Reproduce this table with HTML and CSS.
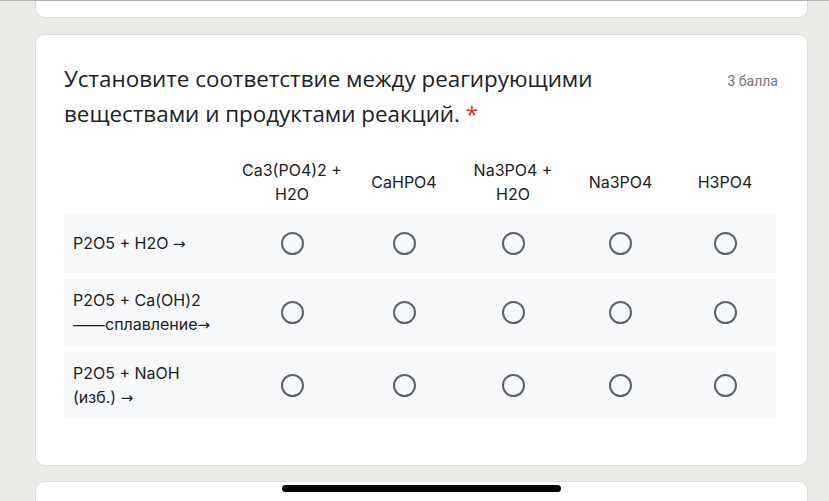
FILE: index.html
```html
<!DOCTYPE html>
<html lang="ru">
<head>
<meta charset="utf-8">
<title>Форма</title>
<link rel="stylesheet" href="styles.css">
</head>
<body>
<div class="topline"></div>
<div class="page">
  <div class="card card-prev"></div>
  <div class="card card-main">
    <div class="q-head">
      <div class="q-title">Установите соответствие между реагирующими веществами и продуктами реакций. <span class="req">*</span></div>
      <div class="points">3 балла</div>
    </div>
    <div class="grid">
      <div class="ghead">
        <div></div>
        <div class="col">Ca3(PO4)2 +<br>H2O</div>
        <div class="col">CaHPO4</div>
        <div class="col">Na3PO4 +<br>H2O</div>
        <div class="col">Na3PO4</div>
        <div class="col">H3PO4</div>
      </div>
      <div class="grow">
        <div class="label">P2O5 + H2O <span class="arrow">→</span></div>
        <div class="cell"><span class="radio"></span></div>
        <div class="cell"><span class="radio"></span></div>
        <div class="cell"><span class="radio"></span></div>
        <div class="cell"><span class="radio"></span></div>
        <div class="cell"><span class="radio"></span></div>
      </div>
      <div class="grow">
        <div class="label">P2O5 + Ca(OH)2<br><span class="dash">——</span>сплавление<span class="arrow">→</span></div>
        <div class="cell"><span class="radio"></span></div>
        <div class="cell"><span class="radio"></span></div>
        <div class="cell"><span class="radio"></span></div>
        <div class="cell"><span class="radio"></span></div>
        <div class="cell"><span class="radio"></span></div>
      </div>
      <div class="grow">
        <div class="label">P2O5 + NaOH<br>(изб.) <span class="arrow">→</span></div>
        <div class="cell"><span class="radio"></span></div>
        <div class="cell"><span class="radio"></span></div>
        <div class="cell"><span class="radio"></span></div>
        <div class="cell"><span class="radio"></span></div>
        <div class="cell"><span class="radio"></span></div>
      </div>
    </div>
  </div>
  <div class="card card-next"></div>
</div>
<div class="home-bar"></div>
</body>
</html>
```

FILE: styles.css
```css
* { box-sizing: border-box; }
html, body { margin: 0; padding: 0; }
body {
  background: #ecebe8;
  font-family: "Inter", "Roboto", sans-serif;
  color: #202124;
  height: 501px;
  overflow: hidden;
}
.topline {
  height: 1px;
  background: #b4b4b2;
}
.page {
  padding: 0 21px 0 35px;
}
.card {
  background: #fff;
  border: 1px solid #dcdcdc;
  border-radius: 9px;
}
.card-prev {
  height: 17px;
  border-top: none;
  border-radius: 0 0 9px 9px;
  margin-bottom: 16px;
}
.card-main {
  height: 432px;
  padding: 26px 29px 0 28px;
  margin-bottom: 15px;
}
.card-next {
  height: 40px;
}
.q-head {
  display: flex;
  justify-content: space-between;
  align-items: flex-start;
}
.q-title {
  font-family: "Open Sans", "Noto Sans", sans-serif;
  font-size: 22.4px;
  line-height: 35px;
  width: 620px;
  color: #202124;
}
.req { color: #d93025; }
.points {
  font-family: "Roboto", sans-serif;
  font-size: 14px;
  color: #70757a;
  padding-top: 12px;
}
.grid {
  margin-top: 27px;
  width: 712px;
}
.ghead, .grow {
  display: grid;
  grid-template-columns: 171px 114px 110px 108px 107px 1fr;
  align-items: center;
}
.ghead {
  margin-bottom: 7px;
}
.col {
  text-align: center;
  font-size: 16px;
  line-height: 24px;
}
.grow {
  background: #f8f9fa;
  min-height: 60px;
  margin-bottom: 6px;
}
.label {
  padding: 9px 0 9px 9px;
  font-size: 16px;
  line-height: 24px;
}
.arrow {
  font-family: "DejaVu Sans", sans-serif;
  font-size: 15px;
}
.dash {
  font-family: "Liberation Sans", sans-serif;
}
.cell {
  display: flex;
  justify-content: center;
}
.radio {
  width: 23px;
  height: 23px;
  border: 2px solid #5f6368;
  border-radius: 50%;
}
.home-bar {
  position: fixed;
  left: 282px;
  top: 485px;
  width: 279px;
  height: 7px;
  background: #000;
  border-radius: 4px;
}
```
